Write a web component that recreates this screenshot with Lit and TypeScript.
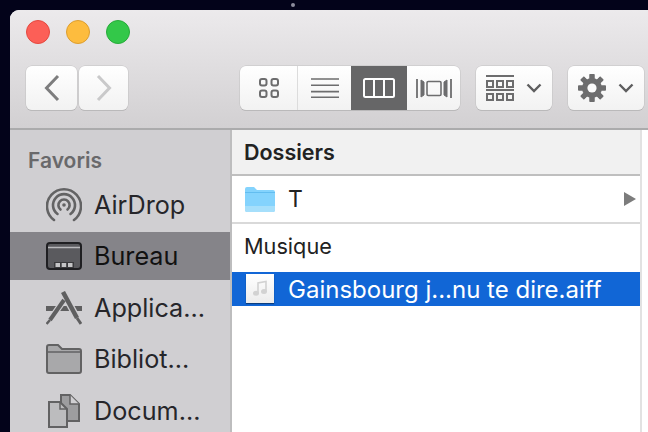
import { LitElement, html, css, svg } from "lit";
import { customElement } from "lit/decorators.js";

const G = "#6d6d6e";

const back = html`<svg width="16" height="28" viewBox="0 0 16 28"><path d="M14 2 L2.5 14 L14 26" fill="none" stroke="#7d7d7e" stroke-width="3"/></svg>`;
const fwd = html`<svg width="16" height="28" viewBox="0 0 16 28"><path d="M2 2 L13.5 14 L2 26" fill="none" stroke="#c9c9ca" stroke-width="3"/></svg>`;

const icons = html`<svg width="20" height="20" viewBox="0 0 20 20" fill="none" stroke="${G}" stroke-width="2"><rect x="1" y="1" width="6.5" height="6.5" rx="2"/><rect x="12.5" y="1" width="6.5" height="6.5" rx="2"/><rect x="1" y="12.5" width="6.5" height="6.5" rx="2"/><rect x="12.5" y="12.5" width="6.5" height="6.5" rx="2"/></svg>`;
const list = html`<svg width="28" height="20" viewBox="0 0 28 20" stroke="${G}" stroke-width="1.6"><path d="M0 1h28M0 7.3h28M0 13.6h28M0 19.2h28"/></svg>`;
const cols = html`<svg width="32" height="20" viewBox="0 0 32 20" fill="none" stroke="#fff" stroke-width="2"><rect x="1" y="1" width="30" height="18" rx="1.5"/><path d="M11 1v18M21 1v18"/></svg>`;
const flow = html`<svg width="36" height="21" viewBox="0 0 36 21" fill="none" stroke="${G}" stroke-width="1.6"><rect x="11" y="3.5" width="14" height="14" rx="1.2"/><path d="M1 1v19M35 1v19" stroke-width="1.8"/><path d="M5 2l3 2v13l-3 2zM31 2l-3 2v13l3 2z" stroke-width="1" fill="${G}"/></svg>`;
const arrange = html`<svg width="28" height="26" viewBox="0 0 28 26" fill="none" stroke="${G}" stroke-width="2"><path d="M0 1h28M0 15h28" stroke-width="1.8"/><rect x="1" y="6" width="6" height="6"/><rect x="11" y="6" width="6" height="6"/><rect x="21" y="6" width="6" height="6"/><rect x="1" y="19" width="6" height="6"/><rect x="11" y="19" width="6" height="6"/><rect x="21" y="19" width="6" height="6"/></svg>`;
const chev = html`<svg width="16" height="10" viewBox="0 0 16 10"><path d="M1.5 1.5 L8 8 L14.5 1.5" fill="none" stroke="#5e5e5f" stroke-width="2.4"/></svg>`;
const teeth = [0, 45, 90, 135, 180, 225, 270, 315].map(
  (a) => svg`<rect x="11.5" y="0" width="5" height="28" rx="0.8" fill="${G}" transform="rotate(${a} 14 14)"/>`
);
const gear = html`<svg width="28" height="28" viewBox="0 0 28 28">${teeth}<circle cx="14" cy="14" r="10" fill="${G}"/><circle cx="14" cy="14" r="4.6" fill="#fbfbfb"/></svg>`;

const airdrop = html`<svg width="36" height="36" viewBox="0 0 36 36" fill="none" stroke="#636364" stroke-linecap="round" stroke-width="2.6"><path d="M8 33A17 17 0 1 1 28 33"/><path d="M11.5 27A11 11 0 1 1 24.5 27"/><path d="M14.5 22.5A5.6 5.6 0 1 1 21.5 22.5"/><circle cx="18" cy="18" r="1.8" fill="#636364" stroke="none"/></svg>`;
const desktop = html`<svg width="36" height="28" viewBox="0 0 36 28"><rect x="1" y="1" width="34" height="26" rx="3" fill="#5a5a5e" stroke="#1f1f22" stroke-width="2"/><path d="M2 5.5h32" stroke="#b9b9bc" stroke-width="1.4"/><rect x="8" y="20" width="20" height="6" fill="#3a3a3d"/><rect x="9.500" y="21" width="4.500" height="4" fill="#c4c4c6"/><rect x="15.700" y="21" width="4.500" height="4" fill="#c4c4c6"/><rect x="22" y="21" width="4.500" height="4" fill="#c4c4c6"/></svg>`;
const apps = html`<svg width="36" height="34" viewBox="0 0 36 34" fill="none"><path d="M0 17.500h36" stroke="#5f5f60" stroke-width="5"/><path d="M17 1 L31 27" stroke="#d0cfd2" stroke-width="7"/><path d="M18 9 L4 29" stroke="#d0cfd2" stroke-width="6.500"/><path d="M17 1 L31 27" stroke="#5f5f60" stroke-width="4.500"/><path d="M31 27 L35 33" stroke="#5f5f60" stroke-width="3"/><path d="M18 9 L4 29" stroke="#5f5f60" stroke-width="4"/><path d="M4 29 L0.500 33" stroke="#5f5f60" stroke-width="2.500"/></svg>`;
const folder = html`<svg width="36" height="30" viewBox="0 0 36 30"><path d="M1 27V3a2 2 0 0 1 2-2h9l4 4h17a2 2 0 0 1 2 2v20a2 2 0 0 1-2 2H3a2 2 0 0 1-2-2Z" fill="#a8a8aa" stroke="#626263" stroke-width="2"/><path d="M1 8h34" stroke="#626263" stroke-width="1.500"/></svg>`;
const docs = html`<svg width="32" height="34" viewBox="0 0 32 34"><path d="M13 1h9l9 9v17H13Z" fill="#9d9d9f" stroke="#626263" stroke-width="2"/><path d="M22 1v9h9" fill="#d0cfd2" stroke="#626263" stroke-width="1.500"/><path d="M1 8h11l7 7v18H1Z" fill="#bcbcbe" stroke="#626263" stroke-width="2"/><path d="M12 8v7h7" fill="none" stroke="#626263" stroke-width="1.500"/></svg>`;
const blueFolder = html`<svg width="30" height="25" viewBox="0 0 30 25"><path d="M0 23V2a2 2 0 0 1 2-2h7l3 3h16a2 2 0 0 1 2 2v18a2 2 0 0 1-2 2H2a2 2 0 0 1-2-2Z" fill="#84d3fd"/><path d="M0 5h30v1H0Z" fill="#62bdf0"/><path d="M0 19h30v4a2 2 0 0 1-2 2H2a2 2 0 0 1-2-2Z" fill="#a6dffb"/></svg>`;
const music = html`<svg width="14" height="16" viewBox="0 0 14 16" fill="none" stroke="#d2d2d2" stroke-width="1.600"><path d="M5 13V3l8-1.500V11"/><ellipse cx="3" cy="13.200" rx="2.200" ry="1.700" fill="#d2d2d2"/><ellipse cx="11" cy="11.500" rx="2.200" ry="1.700" fill="#d2d2d2"/></svg>`;

@customElement("app-root")
export class AppRoot extends LitElement {
  static styles = css`
    :host { display: block; width: 648px; height: 432px; overflow: hidden; font-family: Inter, "Liberation Sans", sans-serif; }
    .desk { position: relative; width: 648px; height: 432px; background: #03031a; padding: 10px 0 0 10px; box-sizing: border-box; overflow: hidden; }
    .star { position: absolute; left: 291px; top: 3px; width: 4px; height: 4px; border-radius: 50%; background: #8d8d9c; }
    .win { width: 660px; height: 422px; border-top-left-radius: 9px; overflow: hidden; background: #fff; display: flex; flex-direction: column; }
    .bar { height: 120px; flex: none; box-sizing: border-box; border-bottom: 2px solid #ababac; background: linear-gradient(#eceaec, #d2d0d2); padding: 10px 0 0 16px; }
    .lights { display: flex; gap: 16px; height: 24px; }
    .l { width: 24px; height: 24px; border-radius: 50%; box-sizing: border-box; }
    .r { background: #fc5f57; border: 1px solid #e5483f; }
    .y { background: #fdbc3e; border: 1px solid #dd9e2f; }
    .g { background: #33c849; border: 1px solid #27ab3a; }
    .tools { display: flex; margin-top: 22px; height: 44px; }
    .btn { height: 44px; box-sizing: border-box; background: linear-gradient(#ffffff, #f2f2f2); border-radius: 6px; box-shadow: 0 0 0 0.5px #c2c1c2, 0 1px 0 #b2b1b2; display: flex; align-items: center; justify-content: center; }
    .back { width: 51px; }
    .fwd { width: 49px; margin-left: 2px; }
    .seg { display: flex; width: 220px; margin-left: 112px; padding: 0; overflow: hidden; }
    .seg > div { height: 44px; display: flex; align-items: center; justify-content: center; box-sizing: border-box; }
    .s1 { width: 58px; border-right: 1px solid #dcdcdc; }
    .s2 { width: 53px; }
    .s3 { width: 56px; background: #666667; }
    .s4 { width: 53px; }
    .menu { width: 76px; gap: 12px; }
    .arr { margin-left: 16px; }
    .gear { margin-left: 16px; }
    .main { flex: 1; display: flex; min-height: 0; }
    .side { width: 220px; flex: none; background: #d0cfd2; box-sizing: border-box; padding-top: 18px; display: flex; flex-direction: column; gap: 3.5px; }
    .head { font-size: 21px; line-height: 26px; font-weight: 600; color: #69696b; padding-left: 18px; margin-bottom: 3px; }
    .it { height: 48px; flex: none; display: flex; align-items: center; font-size: 25.2px; color: #26262a; }
    .it.sel { background: #858489; color: #111; }
    .ic { width: 36px; margin-left: 36px; margin-right: 12px; display: flex; justify-content: center; flex: none; }
    .rest { width: 2px; flex: none; background: #bdbdbe; }
    .col { width: 408px; flex: none; display: flex; flex-direction: column; }
    .dh { height: 46px; flex: none; box-sizing: border-box; background: #f1f1f1; border-bottom: 2px solid #bfbfbf; font-size: 21.5px; font-weight: 600; color: #222; padding-left: 12px; display: flex; align-items: center; }
    .row { height: 48px; flex: none; box-sizing: border-box; display: flex; align-items: center; border-bottom: 2px solid #d9d9d9; font-size: 23px; color: #222; padding: 0 4px 0 13px; }
    .row .nm { margin-left: 13px; flex: 1; }
    .tri { width: 0; height: 0; border-left: 12px solid #7c7c7c; border-top: 7px solid transparent; border-bottom: 7px solid transparent; }
    .sec { height: 48px; flex: none; box-sizing: border-box; display: flex; align-items: center; padding: 0 0 4px 12px; font-size: 21.7px; color: #222; }
    .file { height: 34px; flex: none; background: #1166d6; color: #fff; font-size: 24px; display: flex; align-items: center; padding-left: 14px; }
    .thumb { width: 28px; height: 29px; margin-top: -2px; background: linear-gradient(#fff, #ececec); display: flex; align-items: center; justify-content: center; margin-right: 14px; box-shadow: 0 1px 1px rgba(0,0,0,.4); }
    .edge { width: 2px; flex: none; background: #e2e2e2; }
  `;

  render() {
    const side = [
      ["AirDrop", airdrop, false],
      ["Bureau", desktop, true],
      ["Applica…", apps, false],
      ["Bibliot…", folder, false],
      ["Docum…", docs, false],
    ] as const;
    return html`<div class="desk">
      <div class="star"></div>
      <div class="win">
        <div class="bar">
          <div class="lights"><div class="l r"></div><div class="l y"></div><div class="l g"></div></div>
          <div class="tools">
            <div class="btn back">${back}</div>
            <div class="btn fwd">${fwd}</div>
            <div class="btn seg">
              <div class="s1">${icons}</div><div class="s2">${list}</div><div class="s3">${cols}</div><div class="s4">${flow}</div>
            </div>
            <div class="btn menu arr">${arrange}${chev}</div>
            <div class="btn menu gear">${gear}${chev}</div>
          </div>
        </div>
        <div class="main">
          <div class="side">
            <div class="head">Favoris</div>
            ${side.map(([n, i, s]) => html`<div class="it ${s ? "sel" : ""}"><span class="ic">${i}</span>${n}</div>`)}
          </div>
          <div class="rest"></div>
          <div class="col">
            <div class="dh">Dossiers</div>
            <div class="row">${blueFolder}<span class="nm">T</span><span class="tri"></span></div>
            <div class="sec">Musique</div>
            <div class="file"><span class="thumb">${music}</span>Gainsbourg j...nu te dire.aiff</div>
          </div>
          <div class="edge"></div>
        </div>
      </div>
    </div>`;
  }
}
